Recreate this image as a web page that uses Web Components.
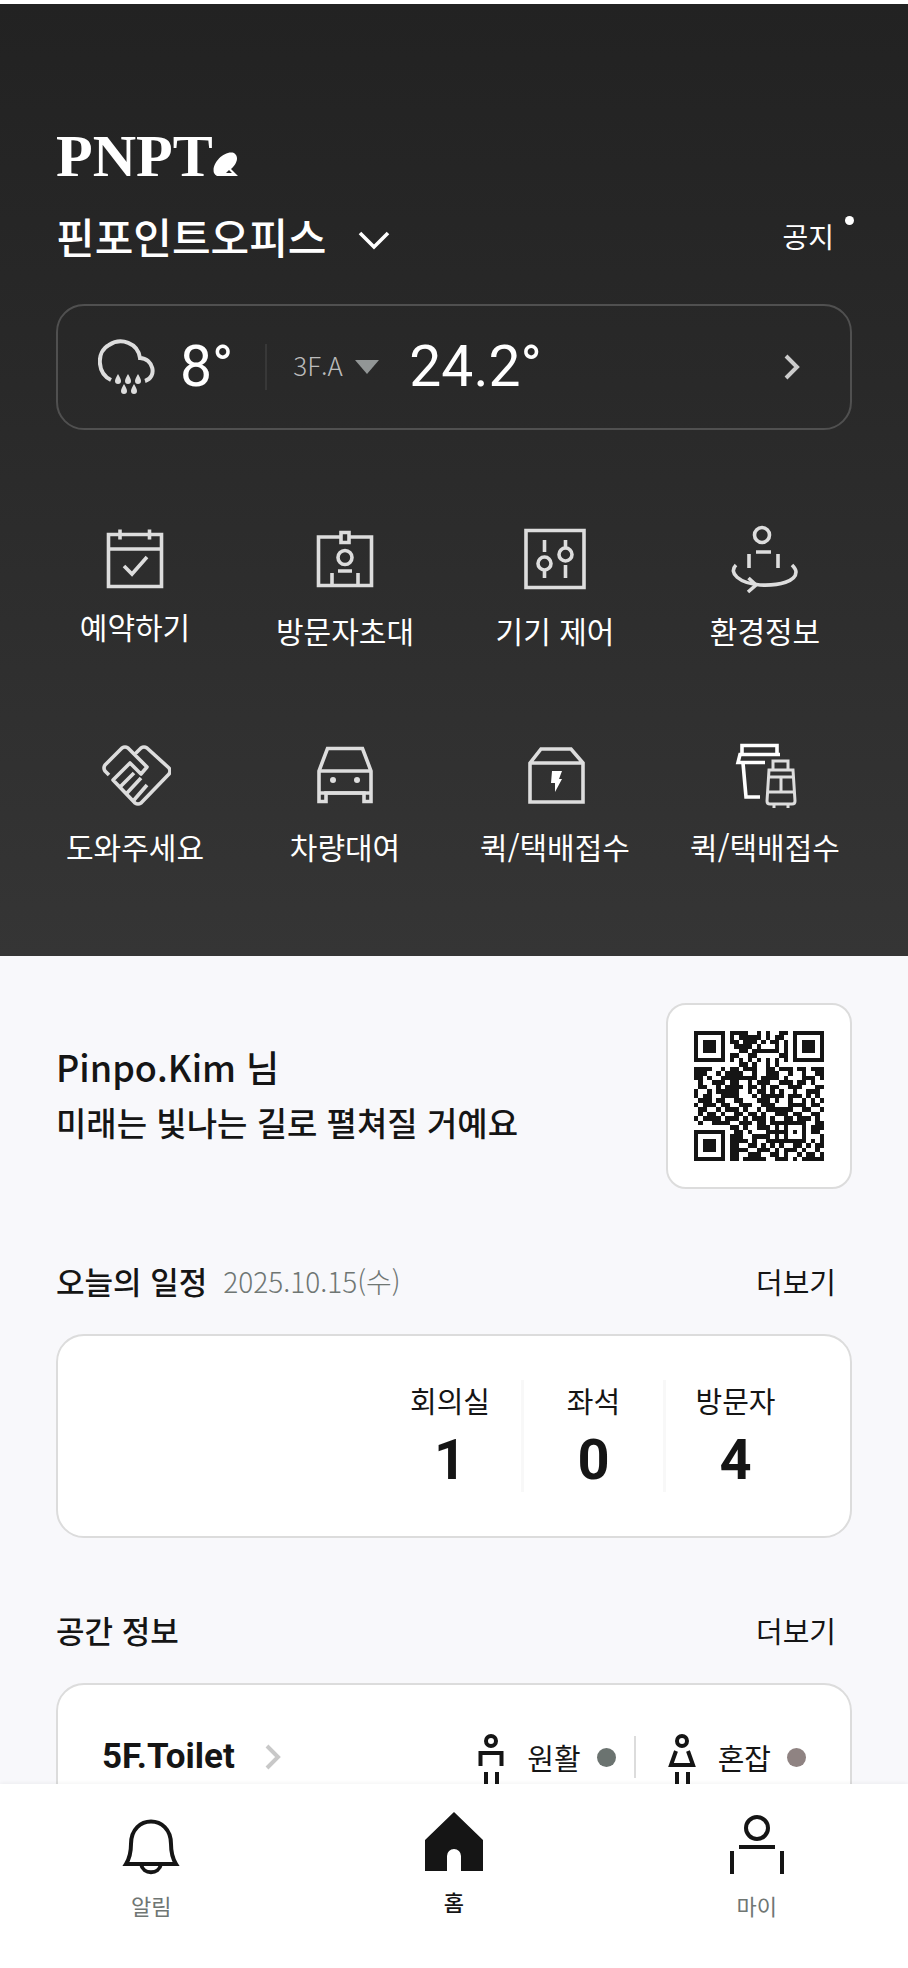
<!DOCTYPE html>
<html lang="ko">
<head>
<meta charset="utf-8">
<meta name="viewport" content="width=device-width, initial-scale=1">
<title>PNPT 핀포인트오피스</title>
<style>
    html, body {
        margin: 0;
        height: 100%;
    }

    body {
        font-family: "Noto Sans CJK KR", "Noto Sans", sans-serif;
        font-size: 29px;
        line-height: 44px;
        color: #151515;
        background: #f8f8fb;
    }
</style>
</head>
<body>
<pnpt-app>
    <pnpt-header slot="header" office="핀포인트오피스">
        <pnpt-weather outside="8°" inside="24.2°"></pnpt-weather>
        <pnpt-menu slot="menu">
            <pnpt-menu-item icon="calendar">예약하기</pnpt-menu-item>
            <pnpt-menu-item icon="badge">방문자초대</pnpt-menu-item>
            <pnpt-menu-item icon="control">기기 제어</pnpt-menu-item>
            <pnpt-menu-item icon="environment">환경정보</pnpt-menu-item>
            <pnpt-menu-item icon="help">도와주세요</pnpt-menu-item>
            <pnpt-menu-item icon="car">차량대여</pnpt-menu-item>
            <pnpt-menu-item icon="box">퀵/택배접수</pnpt-menu-item>
            <pnpt-menu-item icon="luggage">퀵/택배접수</pnpt-menu-item>
        </pnpt-menu>
    </pnpt-header>

    <pnpt-profile>
        <span slot="name">Pinpo.Kim 님</span>
        미래는 빛나는 길로 펼쳐질 거예요
    </pnpt-profile>

    <pnpt-section>
        <span slot="title">오늘의 일정</span>
        <span slot="note">2025.10.15(수)</span>
        <pnpt-schedule>
            <pnpt-count value="1">회의실</pnpt-count>
            <pnpt-count value="0">좌석</pnpt-count>
            <pnpt-count value="4">방문자</pnpt-count>
        </pnpt-schedule>
    </pnpt-section>

    <pnpt-section>
        <span slot="title">공간 정보</span>
        <pnpt-space name="5F.Toilet">
            <pnpt-status icon="man" color="green">원활</pnpt-status>
            <pnpt-status icon="woman" color="red">혼잡</pnpt-status>
        </pnpt-space>
    </pnpt-section>

    <pnpt-tabs slot="tabs">
        <pnpt-tab icon="bell">알림</pnpt-tab>
        <pnpt-tab icon="home" active>홈</pnpt-tab>
        <pnpt-tab icon="my">마이</pnpt-tab>
    </pnpt-tabs>
</pnpt-app>

<script>
const ICONS = {
    calendar: `<svg width="72" height="68" viewBox="0 0 72 68">
        <path d="M9.5 11.5h53v52h-53zM9.5 26h53"/>
        <path d="M21 6.5v10M50.5 6.5v10"/>
        <path d="M25 43l8 8 15-17"/></svg>`,
    badge: `<svg width="72" height="72" viewBox="0 0 72 72">
        <path d="M31 14H9.5v48.5h53V14H41"/>
        <path d="M32 9.5h8v10h-8z"/>
        <circle cx="36" cy="34.5" r="7"/>
        <path d="M29 48h14M23 50v12M49 50v12"/></svg>`,
    control: `<svg width="72" height="72" viewBox="0 0 72 72">
        <path d="M7 7.5h58v57H7zM25.500 17v12M25.500 46v9M46.500 17v7M46.500 42v13"/>
        <circle cx="25.5" cy="40.5" r="6.5"/>
        <circle cx="46.5" cy="31.5" r="6.5"/></svg>`,
    environment: `<svg width="72" height="72" viewBox="2 0 72 72">
        <circle cx="35" cy="12" r="7.5"/>
        <path d="M29 29h15M22 31v14M51 31v14"/>
        <path d="M9 42c-8 8 3 18 24 20 20 1 36-4 36-13 0-3-2-5-4-7"/>
        <path d="M21.5 55l7.5 7-8 7"/></svg>`,
    help: `<svg width="72" height="72" viewBox="1 0 72 72" stroke-linejoin="round">
        <path d="M11 36l-4-4q-2-3 0-6L24 9q3-2 6 0l19 19-6 7-11-11-17 17 22 23q3 2 6 0l28-29q2-3 0-6L49 9q-3-2-6 0l-7 7"/>
        <path d="M22 48l14-14M29 54l14-15M36 61l13-15"/></svg>`,
    car: `<svg width="72" height="72" viewBox="0 0 72 72">
        <path d="M18.5 9.5h35l8.500 22.5v30.5h-7V54H17v8.500h-7V32z"/>
        <path d="M10 32h52M10 54h52"/>
        <g fill="currentColor" stroke="none"><circle cx="24" cy="41" r="3"/><circle cx="48" cy="41" r="3"/></g></svg>`,
    box: `<svg width="72" height="72" viewBox="0 0 72 72">
        <path d="M11 24l11-14h30l12 14v39H11zM11 24h53"/>
        <path fill="#fff" stroke="none" d="M33 32h10l-3 8h3l-7 13v-9h-4z"/></svg>`,
    luggage: `<svg width="72" height="72" viewBox="0 0 72 72">
        <path stroke="#fff" d="M13 15V6.5h35V15M51 15.5H11l-2 8h27M14 24l3 34h14"/>
        <path stroke-width="3" d="M44 31v-9h15v9M40 31h24l2 31q0 3-3 3H41q-3 0-3-3zM39 38h26M38 53h28M52 38v15M45 65v4M59 65v4"/></svg>`,
    weather: `<svg width="58" height="56" viewBox="0 0 58 56" stroke-width="4">
        <path d="M13 41C-1 34-2 13 11 6 23-2 40 4 42 19c13 0 18 19 5 23"/>
        <g fill="currentColor" stroke="none">
            <path d="M20 35q3 5 3 7a3 3 0 0 1-6 0q0-2 3-7z"/>
            <path d="M30 35q3 5 3 7a3 3 0 0 1-6 0q0-2 3-7zM40 35q3 5 3 7a3 3 0 0 1-6 0q0-2 3-7z"/>
            <path d="M26 45q3 5 3 7a3 3 0 0 1-6 0q0-2 3-7zM36 45q3 5 3 7a3 3 0 0 1-6 0q0-2 3-7z"/>
        </g></svg>`,
    down: `<svg width="32" height="20" viewBox="0 0 32 20"><path d="M2 3l14 14L30 3"/></svg>`,
    next: `<svg width="16" height="28" viewBox="0 0 16 28" stroke-width="4"><path d="M2 3l11 11L2 25"/></svg>`,
    man: `<svg width="28" height="60" viewBox="0 0 28 60" stroke-width="4">
        <circle cx="14" cy="8" r="5"/>
        <path d="M3.5 33V20h21v13M9 39v20M20 39v20"/></svg>`,
    woman: `<svg width="28" height="60" viewBox="0 0 28 60" stroke-width="4">
        <circle cx="14" cy="8" r="5"/>
        <path d="M8 18L3 32h22l-5-14M9 39v20M20 39v20"/></svg>`,
    bell: `<svg width="64" height="64" viewBox="0 0 64 64" stroke-width="4">
        <path d="M7 52q5-8 5-20C12 2 52 2 52 32q0 12 5 20z"/>
        <path d="M22 52c2 11 18 11 20 0"/></svg>`,
    home: `<svg width="64" height="60" viewBox="0 0 64 60">
        <path fill="currentColor" stroke="none" d="M32 0l29 28v31H39V44a7 7 0 0 0-14 0v15H3V28z"/></svg>`,
    my: `<svg width="64" height="64" viewBox="0 0 64 64" stroke-width="4">
        <circle cx="32" cy="16" r="11"/>
        <path d="M14 35h36M7 39v23M57 39v23"/></svg>`,
};

const QR_ROWS = [
    '11111110111100101001101111111',
    '10000010101111101011001000001',
    '10111010110111010110101011101',
    '10111010011110100010101011101',
    '10111010001101111110101011101',
    '10000010110011000001101000001',
    '11111110101010101010101111111',
    '00000000001101001010000000000',
    '11110010110111001101110110111',
    '11100101111001001110010010011',
    '11010011111111011110100011101',
    '01001110110010111001110110100',
    '01100101111011010110011100011',
    '10010111110010110101001001110',
    '10110011110001011111011101010',
    '01110110011000111010010010101',
    '10111011001110011100011110110',
    '01100101110100101111110011001',
    '01011010011011010011101100110',
    '10111101110101110100110111010',
    '01001111001110110111111110011',
    '00000000110100111010100010111',
    '11111110011010001111101010110',
    '10000010111001111010100010001',
    '10111010111101001111111110101',
    '10111010110011010101001101011',
    '10111010111100111010111010010',
    '10000010110011100110100101101',
    '11111110110111110011101011111',
];

class BaseElement extends HTMLElement {

    constructor() {
        super();
        this.attachShadow({ mode: 'open' });
    }

    connectedCallback() {
        this.shadowRoot.innerHTML = `
        <style>
            :host {
                display: block;
            }

            * {
                box-sizing: border-box;
            }

            svg {
                display: block;
                flex: none;
                fill: none;
                stroke: currentColor;
            }

            svg:not([stroke-width]) {
                stroke-width: 3.6;
            }

            a {
                color: inherit;
                text-decoration: none;
            }

            button, select {
                margin: 0;
                padding: 0;
                border: 0;
                background: none;
                color: inherit;
                font: inherit;
                cursor: pointer;
            }

            h1, h2, p {
                margin: 0;
                font-weight: inherit;
                font-size: inherit;
            }
        </style>
        ${this.render()}`;
    }

    attr(name) {
        return this.getAttribute(name) || '';
    }

    get icon() {
        return ICONS[this.attr('icon')] || '';
    }
}

/** page shell: scrolling content with the tab bar under it */
customElements.define('pnpt-app', class extends BaseElement {
    render() {
        return `
        <style>
            :host {
                display: flex;
                flex-direction: column;
                height: 100vh;
            }

            main {
                flex: 1;
                min-height: 0;
                overflow-y: auto;
                scrollbar-width: none;
                border-top: 4px solid #fff;
            }
        </style>
        <main>
            <slot name="header"></slot>
            <slot></slot>
        </main>
        <slot name="tabs"></slot>`;
    }
});

customElements.define('pnpt-header', class extends BaseElement {
    render() {
        return `
        <style>
            header {
                padding: 120px 0 88px;
                color: #fff;
                background: linear-gradient(#222, #292929 40%, #353535);
            }

            .inner {
                padding: 0 56px;
            }

            .logo {
                display: flex;
                align-items: flex-end;
                height: 64px;
                font: bold 60px/64px "Liberation Serif", serif;
            }

            .logo svg {
                margin-bottom: 12px;
            }

            .row {
                display: flex;
                align-items: center;
                justify-content: space-between;
                height: 64px;
                margin: 16px 0 36px;
            }

            .office {
                display: flex;
                align-items: center;
                gap: 32px;
                font-size: 42px;
                font-weight: 500;
                line-height: 60px;
            }

            .office svg {
                margin-top: 8px;
            }

            .notice {
                position: relative;
                margin-right: 18px;
                font-size: 28px;
            }

            .notice::after {
                content: "";
                position: absolute;
                top: 2px;
                right: -20px;
                width: 9px;
                height: 9px;
                border-radius: 50%;
                background: #fff;
            }
        </style>
        <header>
            <div class="inner">
                <div class="logo">PNPT<svg width="26" height="24" viewBox="0 0 26 24">
                    <path fill="#fff" fill-rule="evenodd" stroke="none" d="M1 21C-2 12 11-2 21 1c6 4 2 12-3 16l7 7H4q-2-1-3-3zM13 21h6l-3-3z"/>
                </svg></div>
                <div class="row">
                    <h1><button class="office" type="button">${this.attr('office')}${ICONS.down}</button></h1>
                    <a class="notice" href="#notice">공지</a>
                </div>
                <slot></slot>
            </div>
            <slot name="menu"></slot>
        </header>`;
    }
});

customElements.define('pnpt-weather', class extends BaseElement {
    render() {
        return `
        <style>
            .card {
                display: flex;
                align-items: center;
                height: 126px;
                padding: 0 50px 0 40px;
                border: 2px solid #505050;
                border-radius: 28px;
            }

            .weather {
                color: #ddd;
            }

            .temp {
                font: 57px/64px Roboto, sans-serif;
            }

            .outside {
                margin-left: 24px;
            }

            .line {
                width: 2px;
                height: 46px;
                margin: 0 26px 0 32px;
                background: #383838;
            }

            .floor {
                display: flex;
                align-items: center;
                gap: 12px;
                margin-right: 30px;
                color: #bbb;
            }

            select {
                appearance: none;
                font-size: 26px;
                font-weight: 300;
                line-height: 40px;
                margin-bottom: 4px;
            }

            .next {
                margin-left: auto;
                color: #ccc;
            }
        </style>
        <div class="card">
            <span class="weather">${ICONS.weather}</span>
            <span class="temp outside">${this.attr('outside')}</span>
            <span class="line"></span>
            <label class="floor">
                <select aria-label="층 선택"><option>3F.A</option></select>
                <svg width="24" height="14" viewBox="0 0 24 14"><path fill="#929696" stroke="none" d="M0 0h24L12 14z"/></svg>
            </label>
            <span class="temp">${this.attr('inside')}</span>
            <button class="next" type="button" aria-label="날씨 상세">${ICONS.next}</button>
        </div>`;
    }
});

customElements.define('pnpt-menu', class extends BaseElement {
    render() {
        return `
        <style>
            nav {
                display: grid;
                grid-template-columns: repeat(4, 1fr);
                row-gap: 87px;
                padding: 93px 38px 0 30px;
            }
        </style>
        <nav><slot></slot></nav>`;
    }
});

customElements.define('pnpt-menu-item', class extends BaseElement {
    render() {
        return `
        <style>
            a {
                display: flex;
                flex-direction: column;
                align-items: center;
                gap: 13px;
                font-size: 30px;
                white-space: nowrap;
            }

            svg {
                color: #ddd;
            }
        </style>
        <a href="#${this.attr('icon')}">${this.icon}<span><slot></slot></span></a>`;
    }
});

customElements.define('pnpt-profile', class extends BaseElement {
    render() {
        return `
        <style>
            .profile {
                display: flex;
                align-items: center;
                justify-content: space-between;
                padding: 47px 56px 0;
            }

            .text {
                padding-bottom: 4px;
                font-size: 33px;
                font-weight: 500;
                line-height: 56px;
            }

            .name {
                font-size: 36px;
            }
        </style>
        <div class="profile">
            <div class="text">
                <p class="name"><slot name="name"></slot></p>
                <p><slot></slot></p>
            </div>
            <pnpt-qr></pnpt-qr>
        </div>`;
    }
});

customElements.define('pnpt-qr', class extends BaseElement {
    render() {
        const path = QR_ROWS.map((row, y) =>
            [...row].map((cell, x) => cell === '1' ? `M${x} ${y}h1v1h-1z` : '').join('')
        ).join('');
        return `
        <style>
            :host {
                padding: 26px;
                border: 2px solid #dcdcdc;
                border-radius: 20px;
                background: #fff;
            }
        </style>
        <svg width="130" height="130" viewBox="0 0 29 29" role="img" aria-label="QR" shape-rendering="crispEdges">
            <path fill="#151515" stroke="none" d="${path}"/>
        </svg>`;
    }
});

customElements.define('pnpt-section', class extends BaseElement {
    render() {
        return `
        <style>
            section {
                padding: 70px 56px 0;
            }

            .head {
                display: flex;
                align-items: center;
                gap: 16px;
                height: 44px;
                margin-bottom: 31px;
            }

            h2 {
                font-size: 31px;
                font-weight: 500;
            }

            .note {
                font-size: 28px;
                font-weight: 300;
                color: #6f7673;
            }

            .more {
                margin: 0 16px 0 auto;
            }
        </style>
        <section>
            <div class="head">
                <h2><slot name="title"></slot></h2>
                <span class="note"><slot name="note"></slot></span>
                <a class="more" href="#more">더보기</a>
            </div>
            <slot></slot>
        </section>`;
    }
});

customElements.define('pnpt-schedule', class extends BaseElement {
    render() {
        return `
        <style>
            .card {
                display: flex;
                justify-content: flex-end;
                padding: 44px 45px;
                border: 2px solid #dcdcdc;
                border-radius: 28px;
                background: #fff;
            }

            ::slotted(:not(:first-child)) {
                border-left: 3px solid #f8f8f8;
            }
        </style>
        <div class="card"><slot></slot></div>`;
    }
});

customElements.define('pnpt-count', class extends BaseElement {
    render() {
        return `
        <style>
            :host {
                box-sizing: border-box;
                width: 142px;
                height: 112px;
                text-align: center;
            }

            .label {
                line-height: 40px;
            }

            .value {
                font: bold 56px/80px Roboto, sans-serif;
            }
        </style>
        <p class="label"><slot></slot></p>
        <p class="value">${this.attr('value')}</p>`;
    }
});

customElements.define('pnpt-space', class extends BaseElement {
    render() {
        return `
        <style>
            .card {
                display: flex;
                align-items: center;
                justify-content: space-between;
                height: 204px;
                padding: 0 44px 56px;
                border: 2px solid #dcdcdc;
                border-radius: 28px;
                background: #fff;
            }

            .name {
                display: flex;
                align-items: center;
                gap: 30px;
                font: bold 35px/44px Roboto, sans-serif;
            }

            .name svg {
                color: #c8c8c8;
            }

            .list {
                display: flex;
                align-items: center;
            }

            ::slotted(:not(:first-child)) {
                margin-left: 18px;
                padding-left: 32px;
                border-left: 2px solid #dcdcdc;
            }
        </style>
        <div class="card">
            <a class="name" href="#space">${this.attr('name')}${ICONS.next}</a>
            <div class="list"><slot></slot></div>
        </div>`;
    }
});

customElements.define('pnpt-status', class extends BaseElement {
    render() {
        return `
        <style>
            :host {
                display: flex;
                align-items: center;
                gap: 22px;
                height: 42px;
            }

            svg {
                margin-top: 12px;
            }

            .dot {
                width: 19px;
                height: 19px;
                margin-left: -6px;
                border-radius: 50%;
            }

            .green {
                background: #6b7370;
            }

            .red {
                background: #8f8382;
            }
        </style>
        ${this.icon}
        <slot></slot>
        <span class="dot ${this.attr('color')}"></span>`;
    }
});

customElements.define('pnpt-tabs', class extends BaseElement {
    render() {
        return `
        <style>
            nav {
                position: relative;
                display: grid;
                grid-template-columns: repeat(3, 1fr);
                height: 184px;
                padding-top: 28px;
                background: #fff;
                box-shadow: 0 -1px 4px rgb(0 0 0 / 5%);
            }
        </style>
        <nav><slot></slot></nav>`;
    }
});

customElements.define('pnpt-tab', class extends BaseElement {
    render() {
        return `
        <style>
            a {
                display: flex;
                flex-direction: column;
                align-items: center;
                gap: 12px;
                font-size: 22px;
                line-height: 34px;
                color: #6f7673;
            }

            svg {
                color: #151515;
            }

            :host([active]) a {
                font-weight: 500;
                color: #151515;
            }
        </style>
        <a href="#${this.attr('icon')}">${this.icon}<span><slot></slot></span></a>`;
    }
});
</script>
</body>
</html>
